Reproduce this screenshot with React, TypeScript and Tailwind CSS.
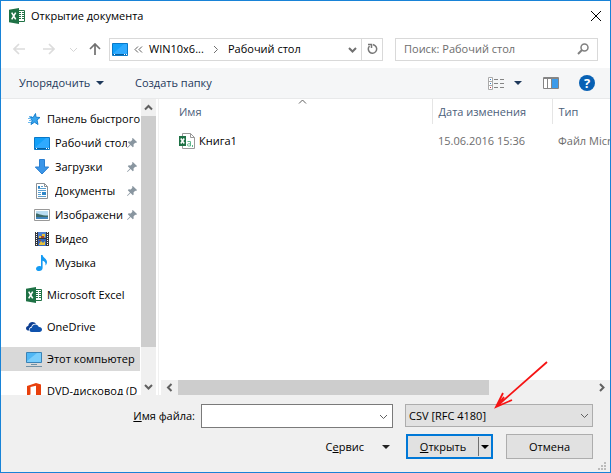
import type { ReactNode } from "react";

const svgBase = { xmlns: "http://www.w3.org/2000/svg", "aria-hidden": true } as const;

function ExcelIcon() {
  return (
    <svg {...svgBase} width="16" height="16" viewBox="0 0 16 16" className="shrink-0">
      <path d="M9 2.500h6.500v11H9z" fill="#fff" stroke="#217346" />
      <path d="M10 4.500h2M13 4.500h2M10 6.500h2M13 6.500h2M10 8.500h2M13 8.500h2M10 10.500h2M13 10.500h2" stroke="#217346" />
      <path d="M0 1.800 10 0v16L0 14.200z" fill="#1e7145" />
      <path d="m2.700 4.700 4 6.600M6.700 4.700l-4 6.600" stroke="#fff" strokeWidth="1.600" />
    </svg>
  );
}

function DesktopIcon() {
  return (
    <svg {...svgBase} width="16" height="13" viewBox="0 0 16 13" className="shrink-0">
      <path d="M.5.5h15v12H.5z" fill="#12a0f8" stroke="#0878c8" />
      <path d="M1 10.500 12 1h3v10H1z" fill="#2faaff" />
      <path d="M1 11.500h14" stroke="#075f9f" />
      <path d="M2 11.500h1M12 11.500h1M14 11.500h1" stroke="#fff" />
    </svg>
  );
}

function StarIcon() {
  return (
    <svg {...svgBase} width="16" height="14" viewBox="0 0 16 14" className="shrink-0">
      <path d="M9.500 1.500 10 5.200l4 .3-3 2.500 1 4.500-3.500-2.300L5 12.500l1.200-4L3.800 5.800l3.500-.5z" fill="#38a5ee" stroke="#1680cf" />
      <path d="M3 4.500h3M2 6.500h3M3 8.500h3M2 10.500h3" stroke="#69b8ee" />
    </svg>
  );
}

function DownloadIcon() {
  return (
    <svg {...svgBase} width="16" height="16" viewBox="0 0 16 16" className="shrink-0">
      <path d="M5.500.500h5V8h4.200L8 15 1.300 8h4.200z" fill="#3b96e8" stroke="#2b7fd0" />
    </svg>
  );
}

function DocumentIcon() {
  return (
    <svg {...svgBase} width="16" height="16" viewBox="0 0 16 16" className="shrink-0">
      <path d="M2.500.500h8l3 3v12h-11z" fill="#fff" stroke="#8b9196" />
      <path d="M10.500.500v3h3" fill="none" stroke="#8b9196" />
      <path d="M7 3.500h2M4 5.500h8M4 7.500h8M4 9.500h3M4 11.500h3M4 13.500h8" stroke="#5a9fd0" />
      <path d="M4 3h2v2H4zM8 9h4v3H8z" fill="#2f86c8" />
    </svg>
  );
}

function PictureIcon() {
  return (
    <svg {...svgBase} width="16" height="12" viewBox="0 0 16 12" className="shrink-0">
      <path d="M.5.5h15v11H.5z" fill="#fff" stroke="#999" />
      <path d="M2 2h12v8H2z" fill="#b9dcf2" />
      <path d="M2 4.500c3 0 4 2 12 2V8H2z" fill="#3d6a68" />
      <path d="M2 8h12v2H2z" fill="#4285bd" />
    </svg>
  );
}

function VideoIcon() {
  return (
    <svg {...svgBase} width="16" height="16" viewBox="0 0 16 16" className="shrink-0">
      <path d="M1 1h14v14H1z" fill="#36383d" />
      <path d="M4 1h8v6H4z" fill="#4d80cf" />
      <path d="M4 8h8v7H4z" fill="#3568bd" />
      <path d="M5 5h3V3h3v3H8v1H5zM5 13l2-3 2 2 2-2v4H5z" fill="#e6c13b" />
      <path d="M7 5h3v2H7zM5 9h2v1H5z" fill="#a4442c" />
      <path d="M2.500 1v14M13.500 1v14" stroke="#fff" strokeDasharray="1 1" />
    </svg>
  );
}

function MusicIcon() {
  return (
    <svg {...svgBase} width="16" height="16" viewBox="0 0 16 16" className="shrink-0">
      <path d="M7 0h1.600c.2 2.800 4.400 3.700 4.400 7 0 1.500-.6 2.700-1.500 3.500.5-3-1-4.200-2.900-4.700V13c0 1.800-1.600 3-3.400 3S2 15.200 2 13.700 3.600 11 5.300 11c.7 0 1.200.1 1.700.4z" fill="#159bf3" />
    </svg>
  );
}

function CloudIcon() {
  return (
    <svg {...svgBase} width="16" height="10" viewBox="0 0 16 10" className="shrink-0">
      <path d="M3 8.500C1.200 8.500 0 7.600 0 6.200 0 5 .9 4 2.200 3.900 2.500 1.500 4.300 0 6.500 0c1.500 0 2.700.7 3.500 1.800-2.500-.4-4.300 1-4.600 2.900C3.500 5 2.600 6.900 3 8.500z" fill="#0c3d91" />
      <path d="M5.700 10C4.400 10 3.500 9.100 3.500 8c0-1.200.9-2.200 2.300-2.300C6 3.700 7.500 2.400 9.300 2.400c1.700 0 3 1 3.500 2.500 1.800-.2 3.200.9 3.200 2.600 0 1.500-1.100 2.500-2.600 2.500z" fill="#0f52ad" />
    </svg>
  );
}

function ComputerIcon() {
  return (
    <svg {...svgBase} width="16" height="15" viewBox="0 0 16 15" className="shrink-0">
      <path d="M.5.5h15v10H.5z" fill="#4fb7f5" stroke="#3a83b6" />
      <path d="M1 9 11 1h4v9H1z" fill="#79cdfb" />
      <path d="M5 12.500h6M0 14.500h16" stroke="#7191a5" />
    </svg>
  );
}

function OfficeIcon() {
  return (
    <svg {...svgBase} width="14" height="16" viewBox="0 0 14 16" className="shrink-0">
      <path d="M0 3 9 0l5 1.500v13L9 16 0 12.900l9 1V2.700L3.500 4v7.500L0 12.900z" fill="#e8400c" />
    </svg>
  );
}

function CsvIcon() {
  return (
    <svg {...svgBase} width="16" height="16" viewBox="0 0 16 16" className="shrink-0">
      <path d="M3.500.500h8l4 4v11h-12z" fill="#fff" stroke="#999" />
      <path d="M11.500.500v4h4" fill="none" stroke="#999" />
      <path d="M8.500 8.500h3v4.500h-2c-1.500 0-1.500-2.200 0-2.200h2M13.500 12v2" fill="none" stroke="#5eb68a" />
      <path d="M0 3h7v10H0z" fill="#1e7145" />
      <path d="m1.800 5.500 3.400 5M5.200 5.500l-3.400 5" stroke="#fff" strokeWidth="1.500" />
    </svg>
  );
}

function PinIcon() {
  return (
    <svg {...svgBase} width="10" height="10" viewBox="0 0 10 10" className="shrink-0">
      <path d="m5.800 0 4.200 4-.9.900-.9-.2-1.700 1.700.2 2-.9.900L3.600 7 .5 10 0 9.500l3-3.100L.8 4.200l.9-.9 2 .2 1.700-1.700-.4-1z" fill="#8996a0" />
    </svg>
  );
}

type Direction = "up" | "down" | "left" | "right";
const chevrons: Record<Direction, string> = {
  up: "M1 6.500 4.500 3 8 6.500",
  down: "M1 3 4.500 6.500 8 3",
  left: "M6.500 1 3 4.500 6.500 8",
  right: "M3 1l3.500 3.500L3 8",
};

function Chevron({ dir, color = "#606060", weight = 2 }: { dir: Direction; color?: string; weight?: number }) {
  return (
    <svg {...svgBase} width="9" height="9" viewBox="0 0 9 9" className="shrink-0">
      <path d={chevrons[dir]} fill="none" stroke={color} strokeWidth={weight} />
    </svg>
  );
}

function Triangle({ color }: { color: string }) {
  return (
    <svg {...svgBase} width="8" height="4" viewBox="0 0 8 4" className="shrink-0">
      <path d="M0 0h8L4 4z" fill={color} />
    </svg>
  );
}

function ArrowIcon({ d, color }: { d: string; color: string }) {
  return (
    <svg {...svgBase} width="12" height="12" viewBox="0 0 12 12" className="shrink-0">
      <path d={d} fill="none" stroke={color} strokeWidth="1.700" />
    </svg>
  );
}

type Place = { label: string; icon: ReactNode; pinned?: boolean };

const quick: Place[] = [
  { label: "Рабочий стол", icon: <DesktopIcon />, pinned: true },
  { label: "Загрузки", icon: <DownloadIcon />, pinned: true },
  { label: "Документы", icon: <DocumentIcon />, pinned: true },
  { label: "Изображени", icon: <PictureIcon />, pinned: true },
  { label: "Видео", icon: <VideoIcon /> },
  { label: "Музыка", icon: <MusicIcon /> },
];

const roots: (Place & { selected?: boolean })[] = [
  { label: "Microsoft Excel", icon: <ExcelIcon /> },
  { label: "OneDrive", icon: <CloudIcon /> },
  { label: "Этот компьютер", icon: <ComputerIcon />, selected: true },
  { label: "DVD-дисковод (D", icon: <OfficeIcon /> },
];

function PlaceRow({ place, nested, selected }: { place: Place; nested?: boolean; selected?: boolean }) {
  return (
    <button
      type="button"
      className={`flex h-6 w-full shrink-0 items-center gap-1 text-left ${nested ? "pl-8" : "pl-6"} ${selected ? "bg-[#d9d9d9]" : ""}`}
    >
      <span className="flex w-[18px] shrink-0 justify-center">{place.icon}</span>
      <span className="-mr-1 min-w-0 flex-1 overflow-hidden whitespace-nowrap">{place.label}</span>
      {place.pinned && (
        <span className="mr-[3px]">
          <PinIcon />
        </span>
      )}
    </button>
  );
}

function Sidebar() {
  return (
    <aside className="flex w-[158px] shrink-0 border-r border-[#f0f0f0]">
      <nav aria-label="Папки" className="flex w-[139px] shrink-0 flex-col gap-2 overflow-hidden pt-2">
        <div className="shrink-0">
          <PlaceRow place={{ label: "Панель быстрого", icon: <StarIcon /> }} />
          {quick.map((p) => (
            <PlaceRow key={p.label} place={p} nested />
          ))}
        </div>
        {roots.map((p) => (
          <PlaceRow key={p.label} place={p} selected={p.selected} />
        ))}
      </nav>
      <div className="ml-px flex w-[15px] flex-col bg-[#f0f0f0]">
        <button type="button" aria-label="Вверх" className="flex h-[17px] items-center justify-center">
          <Chevron dir="up" />
        </button>
        <div className="h-[231px] bg-[#cdcdcd]" />
        <button type="button" aria-label="Вниз" className="mt-auto flex h-[17px] items-center justify-center">
          <Chevron dir="down" />
        </button>
      </div>
    </aside>
  );
}

function FileList() {
  return (
    <main className="flex min-w-0 flex-1 flex-col pl-0.5">
      <div className="relative min-h-0 flex-1 overflow-hidden">
        <table className="w-full table-fixed text-left whitespace-nowrap">
          <thead className="text-[#4c607a]">
            <tr className="h-[25px]">
              <th className="border-r border-[#e5e5e5] p-0 pl-[18px] font-normal">Имя</th>
              <th className="w-[120px] border-r border-[#e5e5e5] p-0 pl-1.5 font-normal">Дата изменения</th>
              <th className="w-[58px] overflow-hidden p-0 pl-1.5 font-normal">Тип</th>
            </tr>
          </thead>
          <tbody className="text-[#6d6d6d]">
            <tr className="h-[34px]">
              <td className="p-0 pl-[18px] text-black">
                <span className="flex items-center gap-1">
                  <CsvIcon />
                  Книга1
                </span>
              </td>
              <td className="p-0 pl-1.5">15.06.2016 15:36</td>
              <td className="overflow-hidden p-0 pl-1.5">Файл Microsoft Excel</td>
            </tr>
          </tbody>
        </table>
        <span className="absolute -top-0.5 left-[137px]">
          <Chevron dir="up" weight={1} />
        </span>
      </div>
      <div className="flex h-[15px] bg-[#f0f0f0]">
        <button type="button" aria-label="Влево" className="flex w-[17px] items-center justify-center">
          <Chevron dir="left" />
        </button>
        <div className="flex min-w-0 flex-1">
          <div className="w-3/4 bg-[#cdcdcd]" />
        </div>
        <button type="button" aria-label="Вправо" className="flex w-[17px] items-center justify-center">
          <Chevron dir="right" />
        </button>
      </div>
    </main>
  );
}

export default function App() {
  return (
    <div className="flex h-screen flex-col overflow-hidden border border-[#1883d7] bg-white font-['Open_Sans','Noto_Sans',sans-serif] text-[11px] leading-4 text-black">
      <header className="flex h-[30px] shrink-0 items-center gap-1.5 pr-2 pl-2">
        <ExcelIcon />
        <h1 className="flex-1">Открытие документа</h1>
        <button type="button" aria-label="Закрыть">
          <svg {...svgBase} width="12" height="12" viewBox="0 0 12 12">
            <path d="m1 1 10 10M11 1 1 11" stroke="#000" />
          </svg>
        </button>
      </header>

      <div className="flex h-[37px] shrink-0 items-center pb-px pr-3 pl-3">
        <div className="flex w-24 shrink-0 items-center">
          <button type="button" aria-label="Назад" className="mr-[18px]">
            <ArrowIcon d="M12 6H1M6 1 1 6l5 5" color="#dcdcdc" />
          </button>
          <button type="button" aria-label="Вперёд" className="mr-[14px]">
            <ArrowIcon d="M0 6h11M6 1l5 5-5 5" color="#dcdcdc" />
          </button>
          <button type="button" aria-label="Последние расположения" className="mr-[11px]">
            <Chevron dir="down" color="#d5d5d5" weight={1} />
          </button>
          <button type="button" aria-label="На уровень вверх">
            <ArrowIcon d="M6 12V1M1 6l5-5 5 5" color="#707070" />
          </button>
        </div>
        <div className="flex h-[23px] min-w-0 flex-1 items-center border border-[#d9d9d9] pl-0.5 whitespace-nowrap">
          <DesktopIcon />
          <svg {...svgBase} width="9" height="7" viewBox="0 0 9 7" className="ml-1.5 shrink-0">
            <path d="M4 .5 1 3.500l3 3M8 .5l-3 3 3 3" fill="none" stroke="#606060" />
          </svg>
          <button type="button" className="ml-1.5 w-[62px] shrink-0 text-left">WIN10x6...</button>
          <Chevron dir="right" color="#707070" weight={1} />
          <button type="button" className="ml-2 flex-1 text-left">Рабочий стол</button>
          <button type="button" aria-label="Предыдущие расположения" className="mr-1">
            <Chevron dir="down" color="#707070" />
          </button>
          <button type="button" aria-label="Обновить" className="flex h-full w-[21px] items-center justify-center border-l border-[#d9d9d9]">
            <svg {...svgBase} width="11" height="12" viewBox="0 0 11 12">
              <path d="M2.500 3A4.200 4.200 0 1 0 8 2.600L6 1.500" fill="none" stroke="#777" strokeWidth="1.500" />
              <path d="M1 1.500h3.500V5" fill="none" stroke="#777" strokeWidth="1.500" />
            </svg>
          </button>
        </div>
        <div className="ml-3 flex h-[23px] w-[203px] shrink-0 items-center border border-[#d9d9d9] pr-2 pl-2">
          <input
            type="text"
            aria-label="Поиск"
            placeholder="Поиск: Рабочий стол"
            className="min-w-0 flex-1 outline-none placeholder:text-[#6d6d6d]"
          />
          <svg {...svgBase} width="12" height="12" viewBox="0 0 12 12" className="shrink-0">
            <circle cx="7.500" cy="4.500" r="3.500" fill="none" stroke="#808080" strokeWidth="1.500" />
            <path d="M5 7 1 11" stroke="#808080" strokeWidth="2" />
          </svg>
        </div>
      </div>

      <div className="flex h-[31px] shrink-0 items-center border-b border-[#e8e9ea] bg-[#f5f6f7] pr-[15px] pl-[18px] text-[#1e395b]">
        <button type="button" className="flex w-[116px] items-center gap-1.5">
          Упорядочить
          <Triangle color="#1e395b" />
        </button>
        <button type="button">Создать папку</button>
        <button type="button" aria-label="Изменить представление" className="ml-auto flex items-center gap-2.5">
          <svg {...svgBase} width="16" height="13" viewBox="0 0 16 13">
            <path d="M.5.5h4v12h-4zM.5 4.500h4M.5 8.500h4" fill="#fff" stroke="#aaa" />
            <path d="M2 2.500h1" stroke="#377fc7" />
            <path d="M2 6.500h1" stroke="#377fc7" />
            <path d="M2 10.500h1" stroke="#c33949" />
            <path d="M6 2.500h4M12 2.500h4M6 6.500h4M12 6.500h4M6 10.500h4M12 10.500h4" stroke="#858585" />
          </svg>
          <Triangle color="#1e395b" />
        </button>
        <button type="button" aria-label="Область просмотра" className="ml-[21px]">
          <svg {...svgBase} width="16" height="12" viewBox="0 0 16 12">
            <path d="M.5.5h15v11H.5z" fill="#fff" stroke="#858585" />
            <path d="M1 1.500h14M4.500 1v10M8.500 1v10" stroke="#858585" />
            <path d="M9 2h6v9H9z" fill="#3d9be9" />
          </svg>
        </button>
        <button
          type="button"
          aria-label="Справка"
          className="ml-5 flex size-4 items-center justify-center rounded-full bg-[#0861b4] text-[13px] font-bold text-white"
        >
          ?
        </button>
      </div>

      <div className="flex min-h-0 flex-1">
        <Sidebar />
        <FileList />
      </div>

      <footer className="relative flex h-[77px] shrink-0 flex-col gap-1.5 bg-[#f0f0f0] pt-[9px] pr-[17px]">
        <div className="flex h-6 items-center">
          <label htmlFor="filename" className="w-[194px] shrink-0 text-right">
            <u>И</u>мя файла:
          </label>
          <div className="ml-1.5 flex h-6 min-w-0 flex-1 items-center border border-[#7a7a7a] bg-white">
            <input id="filename" type="text" className="min-w-0 flex-1 px-1 outline-none" />
            <button type="button" aria-label="Показать список" className="mr-1">
              <Chevron dir="down" weight={1} />
            </button>
          </div>
          <div className="relative ml-3 h-6 w-[188px] shrink-0">
            <select
              aria-label="Тип файла"
              className="h-[23px] w-full appearance-none border border-[#adadad] bg-[#e1e1e1] pl-[3px] outline-none"
            >
              <option>CSV [RFC 4180]</option>
            </select>
            <span className="pointer-events-none absolute top-[7px] right-1">
              <Chevron dir="down" weight={1} />
            </span>
            <svg {...svgBase} width="56" height="49" viewBox="0 0 56 49" className="pointer-events-none absolute -top-[43px] left-[89px]">
              <path d="M53 1 2 46M9 32 2 46l16-7M2 46l8-10" fill="none" stroke="#f51414" strokeWidth="1.800" />
            </svg>
          </div>
        </div>
        <div className="flex h-[25px] items-center justify-end">
          <button type="button" className="mr-4 flex items-center gap-[18px]">
            <span>
              С<u>е</u>рвис
            </span>
            <Triangle color="#222" />
          </button>
          <div className="flex h-[25px] w-[87px] items-center border-2 border-[#0078d7] bg-[#e1e1e1]">
            <button type="button" className="flex-1 text-center">
              <u>О</u>ткрыть
            </button>
            <button type="button" aria-label="Варианты открытия" className="flex h-[19px] w-[13px] items-center justify-center border-l border-[#707070]">
              <Triangle color="#000" />
            </button>
          </div>
          <button type="button" className="ml-[13px] h-[25px] w-[87px] border border-[#adadad] bg-[#e1e1e1]">
            Отмена
          </button>
        </div>
        <svg {...svgBase} width="8" height="8" viewBox="0 0 8 8" className="absolute right-1 bottom-0.5">
          <path d="M6 0h2v2H6zM3 3h2v2H3zM6 3h2v2H6zM0 6h2v2H0zM3 6h2v2H3zM6 6h2v2H6z" fill="#bcbcbc" />
        </svg>
      </footer>
    </div>
  );
}
